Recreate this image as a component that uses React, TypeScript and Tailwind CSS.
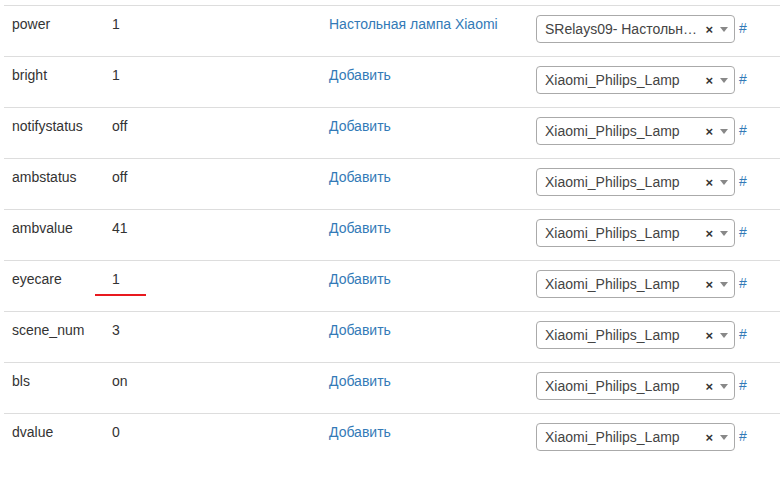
const rows = [
  { name: "power", value: "1", link: "Настольная лампа Xiaomi", device: "SRelays09- Настольная лампа Xiaomi" },
  { name: "bright", value: "1", link: "Добавить", device: "Xiaomi_Philips_Lamp" },
  { name: "notifystatus", value: "off", link: "Добавить", device: "Xiaomi_Philips_Lamp" },
  { name: "ambstatus", value: "off", link: "Добавить", device: "Xiaomi_Philips_Lamp" },
  { name: "ambvalue", value: "41", link: "Добавить", device: "Xiaomi_Philips_Lamp" },
  { name: "eyecare", value: "1", link: "Добавить", device: "Xiaomi_Philips_Lamp", marked: true },
  { name: "scene_num", value: "3", link: "Добавить", device: "Xiaomi_Philips_Lamp" },
  { name: "bls", value: "on", link: "Добавить", device: "Xiaomi_Philips_Lamp" },
  { name: "dvalue", value: "0", link: "Добавить", device: "Xiaomi_Philips_Lamp" },
];

function DeviceSelect({ device }: { device: string }) {
  return (
    <div className="mt-px flex h-[28px] w-[199px] items-center rounded-[4px] border border-[#aaa] bg-white pl-2 pr-[6px]">
      <span className="min-w-0 flex-1 truncate text-[#444]">{device}</span>
      <span className="ml-px text-[13px] font-bold leading-none text-[#333]">×</span>
      <span className="ml-[7px] h-0 w-0 border-x-[4px] border-t-[5px] border-x-transparent border-t-[#888]" />
    </div>
  );
}

export default function App() {
  return (
    <div className="h-[481px] w-[780px] overflow-hidden bg-white pl-1 pt-[5px] font-['Liberation_Sans',Arial,sans-serif] text-[14px] leading-5 text-[#333]">
      <table className="w-[776px] table-fixed border-collapse">
        <colgroup>
          <col className="w-[100px]" />
          <col className="w-[217px]" />
          <col className="w-[207px]" />
          <col />
        </colgroup>
        <tbody>
          {rows.map((row) => (
            <tr key={row.name} className="border-t border-[#ddd]">
              <td className="h-[51px] p-2 align-top">{row.name}</td>
              <td className="p-2 align-top">
                <span className="relative">
                  {row.value}
                  {row.marked && (
                    <span className="absolute left-[-17px] top-[23px] h-[2px] w-[51px] bg-[#e8191f]" />
                  )}
                </span>
              </td>
              <td className="p-2 align-top">
                <a href="#" className="text-[#337ab7]">{row.link}</a>
              </td>
              <td className="p-2 align-top">
                <div className="flex items-start gap-[4px]">
                  <DeviceSelect device={row.device} />
                  <a href="#" className="mt-[4px] text-[#337ab7]">#</a>
                </div>
              </td>
            </tr>
          ))}
        </tbody>
      </table>
    </div>
  );
}
